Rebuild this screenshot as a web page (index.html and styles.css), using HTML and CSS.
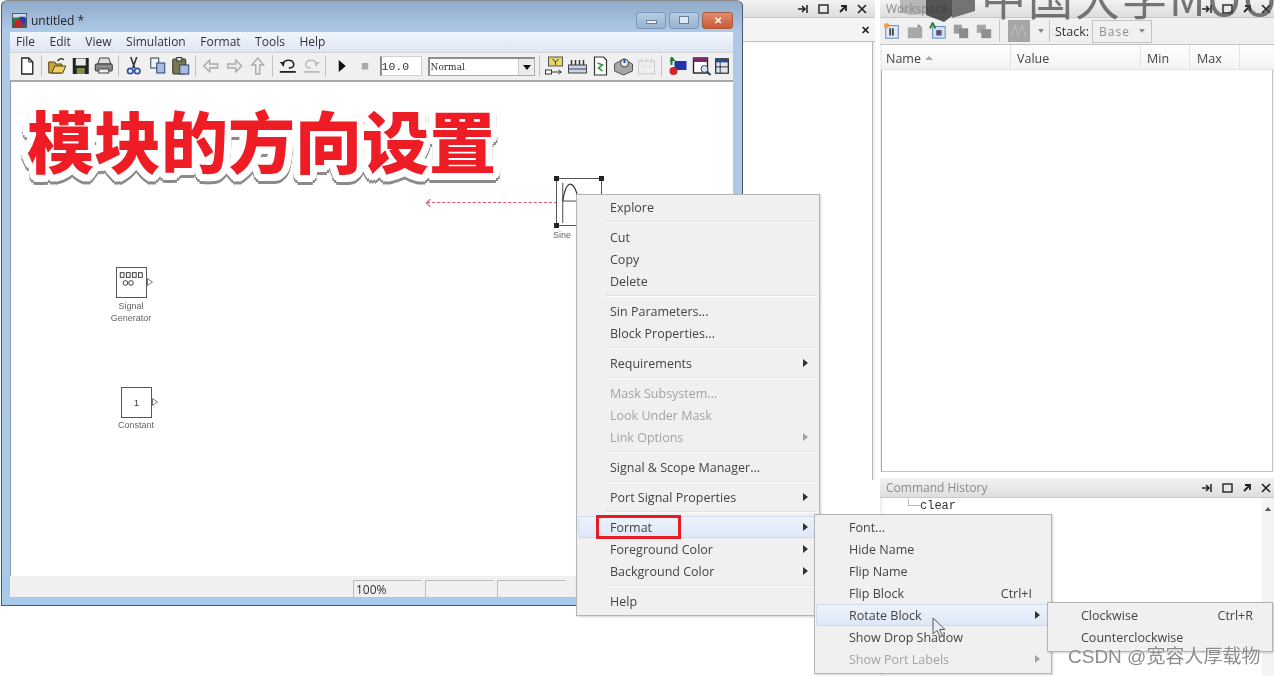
FILE: index.html
```html
<!DOCTYPE html>
<html lang="en">
<head>
    <meta charset="UTF-8">
    <title>untitled *</title>
    <link rel="stylesheet" href="styles.css">
</head>
<body>
<div class="desktop">

    <!-- panel behind the model window -->
    <section class="panel panel-mid">
        <div class="dock-title">
            <div class="dock-icons">
                <svg viewBox="0 0 16 10"><path d="M1 5h7M5 2l3 3-3 3M10 1v8" fill="none" stroke="#222" stroke-width="1.5"/></svg>
                <svg viewBox="0 0 16 10"><rect x="3" y="1" width="9" height="8" fill="none" stroke="#222" stroke-width="1.4"/></svg>
                <svg viewBox="0 0 16 10"><path d="M5 8l5-5M6 2h5v5" fill="none" stroke="#222" stroke-width="1.8"/></svg>
                <svg viewBox="0 0 16 10"><path d="M4 1l8 8M12 1l-8 8" fill="none" stroke="#222" stroke-width="1.6"/></svg>
            </div>
        </div>
        <div class="mid-row"><span class="mid-close">&#10005;</span></div>
        <div class="mid-body"></div>
    </section>

    <!-- workspace -->
    <section class="panel panel-workspace">
        <div class="dock-title dock-title-ws">
            <span class="dock-name">Workspace</span>
            <div class="dock-icons">
                <svg viewBox="0 0 16 10"><path d="M1 5h7M5 2l3 3-3 3M10 1v8" fill="none" stroke="#222" stroke-width="1.5"/></svg>
                <svg viewBox="0 0 16 10"><rect x="3" y="1" width="9" height="8" fill="none" stroke="#222" stroke-width="1.4"/></svg>
                <svg viewBox="0 0 16 10"><path d="M5 8l5-5M6 2h5v5" fill="none" stroke="#222" stroke-width="1.8"/></svg>
                <svg viewBox="0 0 16 10"><path d="M4 1l8 8M12 1l-8 8" fill="none" stroke="#222" stroke-width="1.6"/></svg>
            </div>
        </div>
        <div class="ws-toolbar">
            <svg class="ws-ic" viewBox="0 0 20 20"><rect x="3" y="4" width="14" height="14" fill="#dfe8f5" stroke="#5b84b8"/><rect x="7" y="7" width="2" height="8" fill="#444"/><rect x="10" y="7" width="2" height="8" fill="#444"/><circle cx="4" cy="4" r="3" fill="#eda04d"/></svg>
            <svg class="ws-ic" viewBox="0 0 20 20"><path d="M2 6h16v12H2z" fill="#a9a9a9"/><path d="M13 2l5 4h-5z" fill="#8c8c8c"/></svg>
            <svg class="ws-ic" viewBox="0 0 20 20"><rect x="4" y="5" width="14" height="13" fill="#cfe0f3" stroke="#5b84b8"/><rect x="8" y="9" width="6" height="6" fill="#557"/><path d="M1 7l3-6 3 6" fill="none" stroke="#2b7a2b" stroke-width="2"/></svg>
            <svg class="ws-ic" viewBox="0 0 20 20"><rect x="2" y="3" width="9" height="10" fill="#9d9d9d"/><rect x="8" y="7" width="10" height="11" fill="#8a8a8a"/></svg>
            <svg class="ws-ic" viewBox="0 0 20 20"><rect x="2" y="3" width="10" height="9" fill="#a5a5a5"/><rect x="7" y="8" width="11" height="10" fill="#909090"/></svg>
            <span class="tb-sep ws-sep"></span>
            <svg class="ws-chart" viewBox="0 0 22 22"><rect width="22" height="22" fill="#a6a6a6"/><path d="M3 17l4-12 3 11 4-11 4 12" fill="none" stroke="#bdbdbd"/></svg>
            <span class="ws-arrow"></span>
            <span class="tb-sep ws-sep2"></span>
            <span class="ws-stack">Stack:</span>
            <div class="ws-combo"><span>Base</span><span class="ws-arrow"></span></div>
        </div>
        <div class="ws-head">
            <div class="ws-col col-name">Name <span class="sort-up"></span></div>
            <div class="ws-col col-value">Value</div>
            <div class="ws-col col-min">Min</div>
            <div class="ws-col col-max">Max</div>
            <div class="ws-col col-rest"></div>
        </div>
        <div class="ws-body"></div>
    </section>

    <!-- command history -->
    <section class="panel panel-history">
        <div class="dock-title">
            <span class="dock-name">Command History</span>
            <div class="dock-icons">
                <svg viewBox="0 0 16 10"><path d="M1 5h7M5 2l3 3-3 3M10 1v8" fill="none" stroke="#222" stroke-width="1.5"/></svg>
                <svg viewBox="0 0 16 10"><rect x="3" y="1" width="9" height="8" fill="none" stroke="#222" stroke-width="1.4"/></svg>
                <svg viewBox="0 0 16 10"><path d="M5 8l5-5M6 2h5v5" fill="none" stroke="#222" stroke-width="1.8"/></svg>
                <svg viewBox="0 0 16 10"><path d="M4 1l8 8M12 1l-8 8" fill="none" stroke="#222" stroke-width="1.6"/></svg>
            </div>
        </div>
        <div class="hist-body">
            <div class="hist-list"><span class="hist-line"></span><span class="hist-text">clear</span></div>
            <div class="hist-scroll"><span class="scroll-up"></span></div>
        </div>
    </section>

    <!-- MOOC watermark -->
    <svg class="mooc-logo" viewBox="0 0 76 24">
        <path d="M0 0h26v14L10 15 0 12z" fill="#8a8a8a" fill-opacity=".55"/>
        <path d="M26 0h26v16l-8 6-18-7z" fill="#2e2e2e" fill-opacity=".8"/>
        <path d="M52 0h23v11l-23 7z" fill="#555" fill-opacity=".8"/>
    </svg>
    <div class="mooc-text">中国大学MOOC</div>

    <!-- model window -->
    <section class="window">
        <div class="titlebar">
            <svg class="app-icon" viewBox="0 0 16 16"><rect width="16" height="16" fill="#555"/><rect x="1" y="1" width="14" height="4" fill="#cfd8e6"/><path d="M2 5h6v6H2z" fill="#1a8c3a"/><path d="M8 4h6v7H8z" fill="#1c3fb8"/><circle cx="7" cy="11" r="4" fill="#c8202a"/></svg>
            <span class="title-text">untitled *</span>
            <div class="win-btns">
                <span class="win-btn"><i class="glyph-min"></i></span>
                <span class="win-btn"><i class="glyph-max"></i></span>
                <span class="win-btn win-close">&#10005;</span>
            </div>
        </div>
        <div class="client">
            <nav class="menubar">
                <span>File</span><span>Edit</span><span>View</span><span>Simulation</span><span>Format</span><span>Tools</span><span>Help</span>
            </nav>
            <div class="toolbar">
                <svg class="ic" viewBox="0 0 20 20"><path d="M5 2h7l4 4v12H5z" fill="#fff" stroke="#222" stroke-width="1.3"/><path d="M12 2v4h4" fill="none" stroke="#222"/></svg>
                <span class="tb-sep"></span>
                <svg class="ic" viewBox="0 0 20 20"><path d="M2 6h6l1 2h6v9H2z" fill="#caa63a" stroke="#4d4210"/><path d="M5 17l3-7h11l-3 7z" fill="#ecd067" stroke="#4d4210"/><path d="M11 5c2-3 5-3 6-1" fill="none" stroke="#222" stroke-width="1.4"/></svg>
                <svg class="ic" viewBox="0 0 20 20"><rect x="2" y="2" width="16" height="16" fill="#222"/><rect x="5" y="2.5" width="10" height="7" fill="#e9e9e9"/><rect x="6" y="12" width="8" height="6" fill="#7f8e4a"/></svg>
                <svg class="ic" viewBox="0 0 20 20"><path d="M6 2h9l2 6H4z" fill="#ddd" stroke="#444"/><rect x="1.5" y="8" width="17" height="7" rx="1" fill="#8b8b8b" stroke="#333"/><rect x="5" y="13" width="10" height="4" fill="#eee" stroke="#444"/></svg>
                <span class="tb-sep"></span>
                <svg class="ic" viewBox="0 0 20 20"><path d="M7 1l4 11M13 1l-4 11" stroke="#333" stroke-width="1.6" fill="none"/><circle cx="6.5" cy="15" r="2.7" fill="none" stroke="#2e4fa8" stroke-width="1.7"/><circle cx="13.5" cy="15" r="2.7" fill="none" stroke="#2e4fa8" stroke-width="1.7"/></svg>
                <svg class="ic" viewBox="0 0 20 20"><rect x="3" y="2" width="8" height="10" fill="#eef" stroke="#344"/><rect x="9" y="7" width="8" height="10" fill="#a9bce0" stroke="#2a3f78"/></svg>
                <svg class="ic" viewBox="0 0 20 20"><rect x="2" y="3" width="13" height="15" rx="1" fill="#77794f" stroke="#333"/><rect x="6" y="1.5" width="5" height="3.5" fill="#ddd" stroke="#333"/><rect x="9" y="9" width="9" height="9" fill="#a9bce0" stroke="#2a3f78"/></svg>
                <span class="tb-sep"></span>
                <svg class="ic" viewBox="0 0 20 20"><path d="M9 4L3 10l6 6v-4h8V8H9z" fill="#eee" stroke="#a8a8a8" stroke-width="1.3"/></svg>
                <svg class="ic" viewBox="0 0 20 20"><path d="M11 4l6 6-6 6v-4H3V8h8z" fill="#eee" stroke="#a8a8a8" stroke-width="1.3"/></svg>
                <svg class="ic" viewBox="0 0 20 20"><path d="M10 2l6 7h-4v9H8V9H4z" fill="#eee" stroke="#a8a8a8" stroke-width="1.3"/></svg>
                <span class="tb-sep"></span>
                <svg class="ic" viewBox="0 0 20 20"><path d="M5 8C7 3 15 3 16 8c.5 3-2 4-5 4" fill="none" stroke="#222" stroke-width="1.5"/><path d="M2 6l5 0-1 5z" fill="#222"/><rect x="2" y="15" width="16" height="1.8" fill="#222"/></svg>
                <svg class="ic" viewBox="0 0 20 20"><path d="M15 8C13 3 5 3 4 8c-.5 3 2 4 5 4" fill="none" stroke="#bbb" stroke-width="1.5"/><path d="M18 6l-5 0 1 5z" fill="#bbb"/><rect x="2" y="15" width="16" height="1.8" fill="#bbb"/></svg>
                <span class="tb-sep"></span>
                <svg class="ic" viewBox="0 0 20 20"><path d="M7 4l7 6-7 6z" fill="#111"/></svg>
                <svg class="ic" viewBox="0 0 20 20"><rect x="7" y="7" width="6.5" height="6.5" fill="#a9a9a9"/></svg>
                <div class="tb-input">10.0</div>
                <div class="tb-select"><span>Normal</span><span class="tb-select-btn"></span></div>
                <span class="tb-sep tb-sep-wide"></span>
                <svg class="ic ic-n" viewBox="0 0 20 20"><rect x="4" y="1" width="14" height="9" fill="#e4d46a" stroke="#555"/><path d="M8 3l3 3 3-3M11 6v3" stroke="#333" fill="none"/><rect x="1" y="14" width="6" height="4" fill="#fff" stroke="#333"/><path d="M7 16h9M14 14l3 2-3 2" stroke="#333" fill="none"/></svg>
                <svg class="ic ic-n" viewBox="0 0 20 20"><rect x="1" y="9" width="18" height="8" fill="#c8d4ea" stroke="#444"/><path d="M4 4v5M8 4v5M12 4v5M16 4v5" stroke="#333" stroke-width="1.5"/><path d="M1 13h18" stroke="#444"/></svg>
                <svg class="ic ic-n" viewBox="0 0 20 20"><path d="M4 1h9l3 3v15H4z" fill="#fff" stroke="#333" stroke-width="1.2"/><path d="M7 7l5 2-4 3 4 3" fill="none" stroke="#3a9a45" stroke-width="1.6"/></svg>
                <svg class="ic ic-n" viewBox="0 0 20 20"><path d="M1 8l9-5 9 5v7l-9 4-9-4z" fill="#a6a6a6" stroke="#555"/><circle cx="11" cy="7" r="4" fill="#e8e8e8" stroke="#345"/><path d="M11 3v4" stroke="#2e4fa8" stroke-width="2"/></svg>
                <svg class="ic ic-n" viewBox="0 0 20 20"><rect x="2" y="5" width="16" height="13" fill="#eee" stroke="#ccc"/><path d="M5 2v3M10 2v3M15 2v3M7 11h2M12 11h2" stroke="#ccc"/></svg>
                <span class="tb-sep tb-sep-last"></span>
                <svg class="ic ic-n" viewBox="0 0 20 20"><path d="M3 1v8" stroke="#1d7a35" stroke-width="2"/><rect x="6" y="5" width="12" height="9" fill="#2233a8"/><circle cx="5" cy="15" r="4" fill="#d2232a"/><path d="M1 5l3-4 3 4z" fill="#1d7a35"/></svg>
                <svg class="ic ic-n" viewBox="0 0 20 20"><rect x="2" y="2" width="14" height="15" fill="#fff" stroke="#222" stroke-width="1.4"/><rect x="2" y="2" width="14" height="4" fill="#7a2b6a"/><circle cx="13" cy="13" r="3.5" fill="#cfe0f3" stroke="#345"/><path d="M16 16l3 3" stroke="#345" stroke-width="2"/></svg>
                <svg class="ic ic-last" viewBox="0 0 20 20"><rect x="3" y="2" width="14" height="16" fill="#dfe6f1" stroke="#222" stroke-width="1.3"/><rect x="3" y="2" width="14" height="4" fill="#2a4a96"/><path d="M8 6v12M3 11h14" stroke="#222"/></svg>
            </div>
            <div class="canvas">
                <h1 class="overlay-title">模块的方向设置</h1>

                <div class="drag-line"></div>
                <div class="block block-sine">
                    <svg viewBox="0 0 46 48"><path d="M6 4v42M6 23h38" stroke="#444" fill="none"/><path d="M6 23C9 2 17 -2 22 20v5" stroke="#333" fill="none" stroke-width="1.2"/></svg>
                    <i class="handle h-tl"></i><i class="handle h-tr"></i><i class="handle h-bl"></i>
                </div>
                <div class="block-label label-sine">Sine</div>

                <div class="block block-gen">
                    <svg viewBox="0 0 31 31"><g fill="none" stroke="#333"><rect x="3.500" y="5" width="4" height="5"/><rect x="10" y="5" width="4" height="5"/><rect x="16.500" y="5" width="4" height="5"/><rect x="23" y="5" width="4" height="5"/><circle cx="9" cy="16" r="2.500"/><circle cx="15" cy="16" r="2.500"/></g></svg>
                    <svg class="port" viewBox="0 0 6 8"><path d="M.5 .5l5 3.500-5 3.500z" fill="#fff" stroke="#777"/></svg>
                </div>
                <div class="block-label label-gen">Signal<br>Generator</div>

                <div class="block block-const"><span>1</span><svg class="port" viewBox="0 0 6 8"><path d="M.5 .5l5 3.500-5 3.500z" fill="#fff" stroke="#777"/></svg></div>
                <div class="block-label label-const">Constant</div>
            </div>
            <div class="statusbar">
                <span class="status-cell">100%</span>
                <span class="status-cell"></span>
                <span class="status-cell"></span>
            </div>
        </div>
    </section>

    <!-- context menus -->
    <ul class="menu menu-main">
        <li class="item">Explore</li>
        <li class="sep"></li>
        <li class="item">Cut</li>
        <li class="item">Copy</li>
        <li class="item">Delete</li>
        <li class="sep"></li>
        <li class="item">Sin Parameters...</li>
        <li class="item">Block Properties...</li>
        <li class="sep"></li>
        <li class="item has-sub">Requirements</li>
        <li class="sep"></li>
        <li class="item off">Mask Subsystem...</li>
        <li class="item off">Look Under Mask</li>
        <li class="item off has-sub">Link Options</li>
        <li class="sep"></li>
        <li class="item">Signal &amp; Scope Manager...</li>
        <li class="sep"></li>
        <li class="item has-sub">Port Signal Properties</li>
        <li class="sep"></li>
        <li class="item has-sub active"><span class="format-mark">Format</span></li>
        <li class="item has-sub">Foreground Color</li>
        <li class="item has-sub">Background Color</li>
        <li class="sep"></li>
        <li class="item">Help</li>
    </ul>

    <ul class="menu menu-format">
        <li class="item">Font...</li>
        <li class="item">Hide Name</li>
        <li class="item">Flip Name</li>
        <li class="item">Flip Block<span class="key">Ctrl+I</span></li>
        <li class="item has-sub active">Rotate Block</li>
        <li class="item">Show Drop Shadow</li>
        <li class="item off has-sub">Show Port Labels</li>
    </ul>

    <ul class="menu menu-rotate">
        <li class="item">Clockwise<span class="key">Ctrl+R</span></li>
        <li class="item">Counterclockwise</li>
    </ul>

    <svg class="cursor" viewBox="0 0 14 21"><path d="M1 1v16l4-3.500 3 6.500 2.500-1-3-6.500H13z" fill="#e8eaf0" fill-opacity=".75" stroke="#5c5c5c"/></svg>

    <div class="csdn">CSDN @宽容人厚载物</div>
</div>
</body>
</html>
```

FILE: styles.css
```css
* {
    box-sizing: border-box;
}

html, body {
    margin: 0;
    padding: 0;
    background: #fff;
}

.desktop {
    position: relative;
    width: 1274px;
    height: 676px;
    overflow: hidden;
    background: #fff;
    font-family: "Open Sans", "Noto Sans CJK SC", sans-serif;
    font-size: 12px;
    color: #333;
    filter: blur(.35px);
}

/* docked panels */
.panel {
    position: absolute;
    display: flex;
    flex-direction: column;
    background: #f0f0f0;
}

.panel-mid {
    left: 743px;
    top: 0;
    width: 132px;
    height: 480px;
}

.panel-workspace {
    left: 880px;
    top: 0;
    width: 394px;
    height: 472px;
}

.panel-history {
    left: 880px;
    top: 478px;
    width: 394px;
    height: 198px;
}

.dock-title {
    display: flex;
    align-items: center;
    height: 18px;
    flex: none;
    padding-left: 6px;
    background: linear-gradient(#f2f2f2, #dedede);
    border-bottom: 1px solid #c8c8c8;
    color: #8b8b8b;
    font-size: 12px;
}

.panel-history .dock-title {
    height: 20px;
}

.dock-name {
    flex: 1;
}

.dock-icons {
    display: flex;
    margin-left: auto;
    gap: 3px;
    padding-right: 5px;
}

.panel-workspace .dock-icons,
.panel-history .dock-icons {
    padding-right: 0;
}

.dock-icons svg {
    width: 16px;
    height: 10px;
}

.mid-row {
    display: flex;
    justify-content: flex-end;
    align-items: center;
    height: 24px;
    flex: none;
    padding-right: 5px;
    background: #f4f4f4;
    border-bottom: 1px solid #bdbdbd;
}

.mid-close {
    color: #222;
    font-size: 11px;
    font-weight: 700;
}

.mid-body {
    flex: 1;
    margin-right: 2px;
    background: #fff;
    border-right: 1px solid #b8b8b8;
}

/* workspace */
.ws-toolbar {
    display: flex;
    align-items: center;
    height: 27px;
    flex: none;
    padding-left: 3px;
    border-bottom: 1px solid #c0c0c0;
}

.ws-ic {
    width: 18px;
    height: 18px;
    margin-right: 5px;
}

.tb-sep.ws-sep {
    height: 22px;
    margin: 0 8px 0 1px;
}

.ws-chart {
    width: 22px;
    height: 22px;
}

.ws-arrow {
    width: 0;
    height: 0;
    margin-left: 8px;
    border: 3.5px solid transparent;
    border-top: 4px solid #8a8a8a;
    border-bottom: 0;
}

.tb-sep.ws-sep2 {
    height: 22px;
    margin: 0 5px 0 5px;
}

.ws-stack {
    width: 34px;
    color: #333;
    font-size: 12.5px;
    white-space: nowrap;
}

.ws-combo {
    display: flex;
    align-items: center;
    justify-content: space-between;
    width: 60px;
    height: 23px;
    margin-left: 3px;
    padding: 0 6px;
    border: 1px solid #c4c4c4;
    color: #8f8f8f;
    letter-spacing: 1px;
}

.ws-combo .ws-arrow {
    margin-left: 0;
}

.ws-head {
    display: flex;
    height: 25px;
    flex: none;
    margin-left: 2px;
    background: linear-gradient(#fff, #f3f3f3);
    border-bottom: 1px solid #e2e2e2;
}

.ws-col {
    display: flex;
    align-items: center;
    gap: 4px;
    padding: 2px 0 0 4px;
    border-right: 1px solid #e4e4e4;
    color: #444;
    font-size: 12.5px;
}

.col-name {
    width: 129px;
}

.col-value {
    width: 130px;
    padding-left: 6px;
}

.col-min {
    width: 49px;
    padding-left: 6px;
}

.col-max {
    width: 50px;
    padding-left: 7px;
}

.col-rest {
    flex: 1;
    border-right: 0;
}

.sort-up {
    width: 0;
    height: 0;
    border: 4px solid transparent;
    border-bottom: 4px solid #aaa;
    border-top: 0;
}

.ws-body {
    flex: 1;
    margin: 0 1px 0 1px;
    background: #fff;
    border-bottom: 1px solid #c0c0c0;
    border-left: 1px solid #aaa;
    border-right: 1px solid #c8c8c8;
}

/* command history */
.hist-body {
    display: flex;
    flex: 1;
    margin-left: 2px;
    background: #fff;
}

.hist-list {
    display: flex;
    flex: 1;
    align-items: flex-start;
    padding: 1px 0 0 26px;
    font-family: "Liberation Mono", monospace;
    font-size: 12px;
    line-height: 14px;
    color: #333;
}

.hist-line {
    width: 12px;
    height: 7px;
    border-left: 1px solid #bbb;
    border-bottom: 1px solid #bbb;
}

.hist-scroll {
    display: flex;
    justify-content: center;
    width: 12px;
    padding-top: 9px;
    background: #f4f4f4;
}

.scroll-up {
    width: 0;
    height: 0;
    border: 3px solid transparent;
    border-bottom: 4px solid #555;
    border-top: 0;
}

/* MOOC watermark */
.mooc-logo {
    position: absolute;
    left: 900px;
    top: 0;
    width: 76px;
    height: 24px;
}

.mooc-text {
    position: absolute;
    left: 981px;
    top: -28px;
    font-family: "Noto Sans CJK SC", sans-serif;
    font-size: 45px;
    font-weight: 400;
    line-height: 50px;
    letter-spacing: 2px;
    white-space: nowrap;
    color: rgba(70, 70, 70, .72);
}

/* model window */
.window {
    position: absolute;
    left: 1px;
    top: 0;
    display: flex;
    flex-direction: column;
    width: 742px;
    height: 606px;
    padding: 0 9px 8px 8px;
    background: linear-gradient(#8fabc9 0, #aec9e6 30px, #a9c9e8 100%);
    border: 1px solid #4a5a66;
    border-top-color: #8c8c8c;
    border-radius: 6px 6px 0 0;
}

.titlebar {
    display: flex;
    align-items: center;
    height: 31px;
    flex: none;
    padding: 7px 0 0 2px;
}

.app-icon {
    width: 15px;
    height: 15px;
    margin-right: 4px;
}

.title-text {
    color: #222;
    font-size: 12px;
}

.win-btns {
    display: flex;
    margin-left: auto;
    gap: 3px;
}

.win-btn {
    display: flex;
    align-items: center;
    justify-content: center;
    width: 30px;
    height: 17px;
    border: 1px solid #7d97b4;
    border-radius: 3px;
    background: linear-gradient(#b6cce3, #98b4d2);
}

.glyph-min {
    width: 11px;
    height: 4px;
    margin-top: 4px;
    background: #eef3f8;
    border: 1px solid #6c7f94;
}

.glyph-max {
    width: 10px;
    height: 8px;
    background: #dfe8f2;
    border: 1px solid #6c7f94;
}

.win-close {
    width: 31px;
    border-color: #a85a3c;
    background: linear-gradient(#e08d70, #cb5a33);
    color: #fff;
    font-size: 10px;
    font-weight: 700;
}

.client {
    display: flex;
    flex: 1;
    flex-direction: column;
    min-height: 0;
}

.menubar {
    display: flex;
    align-items: center;
    gap: 14.5px;
    height: 20px;
    flex: none;
    padding-left: 6px;
    padding-bottom: 2px;
    background: linear-gradient(#f2f6fc, #dde5f5);
    color: #333;
    font-size: 12px;
}

.toolbar {
    display: flex;
    align-items: center;
    height: 30px;
    flex: none;
    padding: 0 0 1px 5px;
    background: #f0f0f0;
    border-top: 1px solid #d4d4d4;
    border-bottom: 2px solid #a8a8a8;
}

.ic {
    width: 23.5px;
    height: 20px;
    flex: none;
}

.ic-n {
    width: 23px;
}

.ic-last {
    width: 18px;
}

.tb-sep {
    display: block;
    width: 1px;
    height: 22px;
    flex: none;
    margin: 0 3.5px 0 2px;
    background: #c4c4c4;
}

.tb-sep-wide {
    margin: 0 3px 0 4px;
}

.tb-sep-last {
    margin: 0 5px 0 3px;
}

.tb-input {
    display: flex;
    align-items: center;
    width: 42px;
    height: 20px;
    flex: none;
    margin-left: 3px;
    background: #fff;
    border: 1px solid #d0d0d0;
    border-left: 2px solid #8a8a8a;
    font-family: "Liberation Mono", monospace;
    font-size: 11.5px;
    color: #333;
}

.tb-select {
    display: flex;
    align-items: center;
    justify-content: space-between;
    width: 107px;
    height: 19px;
    flex: none;
    margin-left: 6px;
    padding-left: 1px;
    background: #fff;
    border: 1px solid #aaa;
    border-top: 2px solid #8e8e8e;
    border-left: 2px solid #8e8e8e;
    font-family: "DejaVu Serif", serif;
    font-size: 9px;
    color: #333;
}

.tb-select-btn {
    position: relative;
    width: 16px;
    height: 16px;
    background: #ececec;
    border-left: 1px solid #ccc;
}

.tb-select-btn::after {
    content: "";
    position: absolute;
    left: 4px;
    top: 6px;
    border: 4px solid transparent;
    border-top: 5px solid #111;
    border-bottom: 0;
}

.canvas {
    position: relative;
    flex: 1;
    min-height: 0;
    background: #fff;
    border-left: 1px solid #8e9aa6;
}

.statusbar {
    display: flex;
    align-items: flex-end;
    gap: 3px;
    height: 21px;
    flex: none;
    padding-left: 343px;
    background: #f0f0f0;
}

.status-cell {
    display: flex;
    align-items: center;
    width: 69px;
    height: 17px;
    padding-left: 2px;
    border-top: 1px solid #bdbdbd;
    border-left: 1px solid #bdbdbd;
    color: #333;
    font-size: 12px;
}

/* title laid over the canvas */
.overlay-title {
    position: absolute;
    left: 16px;
    top: 12px;
    margin: 0;
    font-family: "Noto Sans CJK SC", sans-serif;
    font-size: 67px;
    font-weight: 900;
    line-height: 90px;
    white-space: nowrap;
    color: #ee1c25;
    text-shadow:
        7px 0 0 #fff, -7px 0 0 #fff, 0 7px 0 #fff, 0 -7px 0 #fff,
        5px 5px 0 #fff, -5px 5px 0 #fff, 5px -5px 0 #fff, -5px -5px 0 #fff,
        6.500px 2.700px 0 #fff, -6.500px 2.700px 0 #fff, 6.500px -2.700px 0 #fff, -6.500px -2.700px 0 #fff,
        2.700px 6.500px 0 #fff, -2.700px 6.500px 0 #fff, 2.700px -6.500px 0 #fff, -2.700px -6.500px 0 #fff;
    filter: drop-shadow(0 3px 0 #8a8a8a);
}

/* blocks sit on a free canvas */
.block {
    position: absolute;
    background: #fff;
    border: 1.5px solid #555;
}

.block svg {
    display: block;
    width: 100%;
    height: 100%;
}

.block-sine {
    left: 545px;
    top: 96px;
    width: 46px;
    height: 48px;
}

.block-gen {
    left: 105px;
    top: 185px;
    width: 31px;
    height: 31px;
}

.block-const {
    display: flex;
    align-items: center;
    justify-content: center;
    left: 110px;
    top: 305px;
    width: 31px;
    height: 31px;
    font-family: "Liberation Sans", sans-serif;
    font-size: 9px;
    color: #333;
}

.handle {
    position: absolute;
    width: 5px;
    height: 5px;
    background: #222;
}

.h-tl {
    left: -3px;
    top: -3px;
}

.h-tr {
    right: -3px;
    top: -3px;
}

.h-bl {
    left: -3px;
    bottom: -3px;
}

.block .port {
    position: absolute;
    right: -7px;
    top: 10px;
    width: 6px;
    height: 8px;
}

.block-label {
    position: absolute;
    font-family: "Liberation Sans", sans-serif;
    font-size: 9px;
    line-height: 12px;
    text-align: center;
    color: #666;
    transform: translateX(-50%);
}

.label-sine {
    left: 551px;
    top: 147px;
}

.label-gen {
    left: 120px;
    top: 218px;
}

.label-const {
    left: 125px;
    top: 337px;
}

.drag-line {
    position: absolute;
    left: 416px;
    top: 120px;
    width: 130px;
    border-top: 1px dashed #e0506e;
}

.drag-line::before {
    content: "";
    position: absolute;
    left: 0;
    top: -3px;
    width: 5px;
    height: 5px;
    border-left: 1px solid #e0506e;
    border-bottom: 1px solid #e0506e;
    transform: rotate(45deg);
}

/* context menus */
.menu {
    position: absolute;
    margin: 0;
    padding: 1px 2px 3px 1px;
    list-style: none;
    background: #f0f0f0;
    border: 1px solid #b4b4b4;
    box-shadow: 1px 1px 2px rgba(0, 0, 0, .18);
    font-size: 12.5px;
    color: #444;
}

.menu-main {
    left: 576px;
    top: 194px;
    width: 244px;
}

.menu-format {
    left: 814px;
    top: 514px;
    width: 238px;
}

.menu-format .item {
    padding-left: 32px;
}

.menu-rotate {
    left: 1047px;
    top: 602px;
    width: 226px;
}

.item {
    position: relative;
    display: flex;
    align-items: center;
    height: 22px;
    padding-left: 31px;
    border: 1px solid transparent;
    white-space: nowrap;
}

.off {
    color: #a3a3a3;
}

.active {
    background: linear-gradient(#eef3fb, #dde7f7);
    border-color: #cfdcf0;
    border-radius: 2px;
}

.has-sub::after {
    content: "";
    position: absolute;
    right: 8px;
    top: 6px;
    border: 4px solid transparent;
    border-left: 5px solid #333;
    border-right: 0;
}

.off.has-sub::after {
    border-left-color: #a3a3a3;
}

.sep {
    height: 8px;
    background: linear-gradient(#f0f0f0 3px, #e2e2e2 3px, #e2e2e2 4px, #fbfbfb 4px, #fbfbfb 5px, #f0f0f0 5px);
    margin-left: 28px;
}

.key {
    position: absolute;
    right: 16px;
}

.format-mark {
    display: flex;
    align-items: center;
    height: 24px;
    width: 85px;
    margin-left: -14px;
    padding-left: 11px;
    border: 3px solid #e81c24;
}

.cursor {
    position: absolute;
    left: 932px;
    top: 617px;
    width: 14px;
    height: 21px;
}

.csdn {
    position: absolute;
    left: 1068px;
    top: 645px;
    font-family: "Liberation Sans", "Noto Sans CJK SC", sans-serif;
    font-size: 19px;
    line-height: 24px;
    white-space: nowrap;
    color: #8c8c8c;
    text-shadow: 0 0 2px #fff;
}
```
